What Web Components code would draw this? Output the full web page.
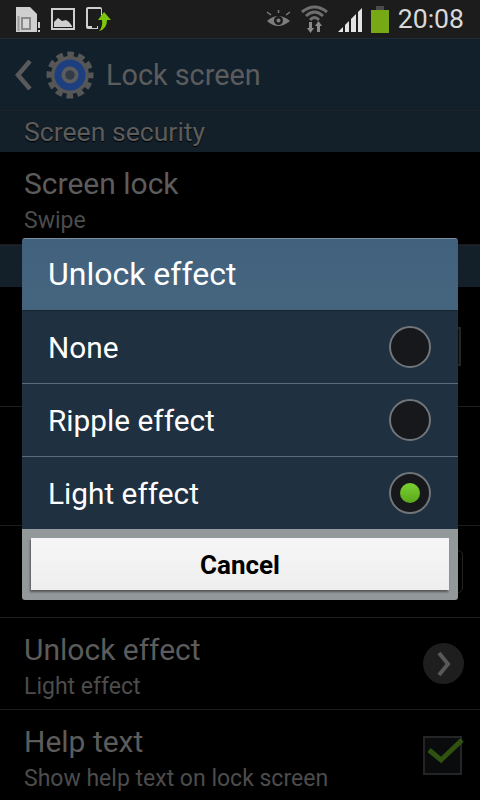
<!DOCTYPE html>
<html>
<head>
<meta charset="utf-8">
<title>Lock screen</title>
<style>
  html, body { margin: 0; background: #000; }
  body { font-family: Roboto, "Liberation Sans", sans-serif; }
</style>
</head>
<body>
<lock-screen></lock-screen>

<template id="status-bar-template">
  <style>
    :host { display: flex; align-items: center; height: 38px; background: #1c1c1c; color: #d9d9d9; }
    svg { display: block; flex: none; }
    .time { font-size: 26.600px; margin-left: 9px; margin-right: 16px; line-height: 38px; }
    .sd { margin-left: 16px; }
    .image { margin-left: 11px; }
    .upload { margin-left: 11px; }
    .eye { margin-left: auto; }
    .wifi { margin-left: 10px; }
    .signal { margin-left: 10px; }
    .battery { margin-left: 8px; }
  </style>
  <svg class="sd" width="24" height="26" viewBox="0 0 24 26">
    <path d="M0 1H14L21 8V26H0Z" fill="#cfcfcf"/>
    <path d="M5 11H15V24H5Z" fill="#8a8a8a"/>
    <path d="M7 13H13V22H7Z" fill="#d6d6d6"/>
    <rect x="1.500" y="10" width="2" height="15" fill="#9a9a9a"/>
    <rect x="22" y="16" width="2" height="6" fill="#cfcfcf"/>
    <rect x="22" y="24" width="2" height="2" fill="#cfcfcf"/>
  </svg>
  <svg class="image" width="24" height="22" viewBox="0 0 24 22">
    <rect x="1" y="1" width="22" height="20" fill="none" stroke="#cfcfcf" stroke-width="2"/>
    <path d="M3 19V14L7 10L11 13L15 12L18 14L21 18V19Z" fill="#cfcfcf"/>
  </svg>
  <svg class="upload" width="25" height="26" viewBox="0 0 25 26">
    <path d="M2 1H14Q16 1 16 3V9L12 14V23H2Q0 23 0 21V3Q0 1 2 1Z" fill="#cfcfcf"/>
    <rect x="2" y="3" width="13" height="17" fill="#1c1c1c"/>
    <rect x="6" y="20" width="5" height="2" fill="#1c1c1c"/>
    <path d="M18 6L25 14H21Q21 23 13 25Q17 21 16 14H12Z" fill="#7cc70e"/>
  </svg>
  <svg class="eye" width="25" height="19" viewBox="0 0 25 19">
    <path d="M1 11Q12 1 24 11Q12 21 1 11Z" fill="#7d7d7d"/>
    <circle cx="12.500" cy="10.500" r="4.500" fill="#1c1c1c"/>
    <circle cx="12.500" cy="10.500" r="2" fill="#7d7d7d"/>
    <path d="M1 2L5 5M12.500 0V3M24 2L20 5" stroke="#7d7d7d" stroke-width="1.500" fill="none"/>
  </svg>
  <svg class="wifi" width="27" height="28" viewBox="0 0 27 28">
    <path d="M1 7Q13.500 -3 26 7" fill="none" stroke="#6e6e6e" stroke-width="3"/>
    <path d="M5 11Q13.500 3 22 11" fill="none" stroke="#6e6e6e" stroke-width="3"/>
    <path d="M9 15Q13.500 10 18 15" fill="none" stroke="#6e6e6e" stroke-width="3"/>
    <path d="M8 17H11V23H13L9.500 28L6 23H8Z" fill="#8a8a8a"/>
    <path d="M16 27H19V21H21L17.500 16L14 21H16Z" fill="#8a8a8a"/>
  </svg>
  <svg class="signal" width="25" height="25" viewBox="0 0 25 25">
    <path d="M0 25L5 20V25Z" fill="#e4e4e4"/>
    <path d="M7 25V18L11 14V25Z" fill="#e4e4e4"/>
    <path d="M13 25V12L18 7V25Z" fill="#e4e4e4"/>
    <path d="M20 25V5L24 1V25Z" fill="#e4e4e4"/>
  </svg>
  <svg class="battery" width="18" height="27" viewBox="0 0 18 27">
    <rect x="5" y="0" width="8" height="4" fill="#4a4a4a"/>
    <rect x="0" y="4" width="18" height="23" fill="#77a916"/>
  </svg>
  <span class="time"><slot></slot></span>
</template>

<template id="action-bar-template">
  <style>
    :host { display: flex; align-items: center; height: 71px; background: #12202c; border-top: 1px solid #1f2b35; color: #5c5c5c; font-size: 28.800px; }
    svg { display: block; flex: none; }
    .back { margin-left: 15px; }
    .gear { margin-left: 14px; }
    .title { margin-left: 12px; }
  </style>
  <svg class="back" width="17" height="30" viewBox="0 0 17 30">
    <path d="M15 1L3 15L15 29" fill="none" stroke="#5a5a5a" stroke-width="4.500"/>
  </svg>
  <svg class="gear" width="48" height="48" viewBox="0 0 48 48">
    <circle cx="24" cy="24" r="20.500" fill="none" stroke="#565656" stroke-width="6" stroke-dasharray="6.500 4.230" stroke-dashoffset="3.250"/>
    <circle cx="24" cy="24" r="19" fill="#565656"/>
    <circle cx="24" cy="24" r="15.500" fill="#1d3f80"/>
    <circle cx="24" cy="24" r="6.500" fill="none" stroke="#5c5c5c" stroke-width="4"/>
    <circle cx="24" cy="24" r="4.500" fill="#333b44"/>
  </svg>
  <span class="title"><slot></slot></span>
</template>

<template id="section-header-template">
  <style>
    :host { display: flex; align-items: center; box-sizing: border-box; padding-left: 24px; background: #13202a; color: #5c5c5c; font-size: 26.600px; border-top: 1px solid #1c2227; text-shadow: 0 1px 1px #000; }
  </style>
  <slot></slot>
</template>

<template id="setting-row-template">
  <style>
    :host { display: flex; align-items: center; box-sizing: border-box; padding: 0 16px 0 24px; background: #000; border-bottom: 1px solid #1c1c1c; color: #5c5c5c; }
    .text { flex: 1; padding-top: 6px; }
    .title { font-size: 30px; line-height: 36px; }
    .sub { font-size: 23px; line-height: 30px; margin-top: 4px; color: #4c4c4c; }
  </style>
  <div class="text">
    <div class="title"><slot name="title"></slot></div>
    <div class="sub"><slot name="sub"></slot></div>
  </div>
  <slot name="control"></slot>
</template>

<template id="radio-row-template">
  <style>
    :host { display: flex; align-items: center; height: 72px; padding: 0 27px 0 26px; color: #fff; font-size: 29.800px; border-top: 1px solid #5b6b78; }
    :host(:first-of-type) { border-top: 0; }
    .label { flex: 1; }
    .radio { box-sizing: border-box; width: 42px; height: 42px; border-radius: 50%; background: #17181b; border: 2px solid #70757a; display: flex; align-items: center; justify-content: center; }
    .dot { width: 20px; height: 20px; border-radius: 50%; background: linear-gradient(#7bd030, #5aa81c); display: none; }
    :host([checked]) .dot { display: block; }
  </style>
  <span class="label"><slot></slot></span>
  <span class="radio"><span class="dot"></span></span>
</template>

<template id="unlock-dialog-template">
  <style>
    :host { display: block; position: absolute; left: 22px; top: 200px; width: 436px; border-radius: 3px; overflow: hidden; }
    .title { box-sizing: border-box; height: 73px; display: flex; align-items: center; padding: 0 0 2px 26px; background: linear-gradient(#42617d, #45657f); border-top: 1px solid #7b8d9c; border-bottom: 1px solid #172531; color: #fff; font-size: 32px; }
    .list { background: #1f3040; }
    .footer { box-sizing: border-box; height: 71px; padding: 9px 9px 10px; background: #93989a; }
    button { display: block; width: 100%; height: 52px; border: 0; padding: 1px 0 0; background: linear-gradient(#f6f6f6, #eeeeee); box-shadow: -1px 2px 2px #555; color: #000; font: bold 26px Roboto, "Liberation Sans", sans-serif; }
  </style>
  <div class="title"><slot name="title"></slot></div>
  <div class="list"><slot></slot></div>
  <div class="footer"><button><slot name="action"></slot></button></div>
</template>

<template id="lock-screen-template">
  <style>
    :host { display: flex; flex-direction: column; width: 480px; height: 800px; overflow: hidden; background: #000; }
    main { position: relative; flex: 1; min-height: 0; }
    .h1 { height: 42px; }
    .h2 { height: 42px; }
    .check { box-sizing: border-box; width: 39px; height: 39px; margin-right: 2px; border: 2px solid #252525; background: #090b0c; position: relative; }
    .check svg { position: absolute; left: 2px; top: -2px; }
    .hidden-check { margin-right: 3px; }
    .hidden-box { box-sizing: border-box; width: 40px; height: 43px; margin-right: 1px; border: 1px solid #222; border-radius: 5px; }
    .arrow { width: 41px; height: 41px; border-radius: 50%; background: #1e1e1e; display: flex; align-items: center; justify-content: center; }
    .r1 { height: 93px; }
    .r2 { height: 120px; }
    .r3 { height: 119px; }
    .r4 { height: 92px; }
    .r5 { height: 92px; }
    .r6 { height: 91px; border-bottom: 0; }
  </style>
  <status-bar>20:08</status-bar>
  <main>
    <action-bar>Lock screen</action-bar>
    <section-header class="h1">Screen security</section-header>
    <setting-row class="r1"><span slot="title">Screen lock</span><span slot="sub">Swipe</span></setting-row>
    <section-header class="h2"></section-header>
    <setting-row class="r2"><span slot="control" class="check hidden-check"></span></setting-row>
    <setting-row class="r3"></setting-row>
    <setting-row class="r4"><span slot="control" class="hidden-box"></span></setting-row>
    <setting-row class="r5">
      <span slot="title">Unlock effect</span><span slot="sub">Light effect</span>
      <span slot="control" class="arrow"><svg width="14" height="24" viewBox="0 0 14 24"><path d="M2 1L11 12L2 23" fill="none" stroke="#585858" stroke-width="4"/></svg></span>
    </setting-row>
    <setting-row class="r6">
      <span slot="title">Help text</span><span slot="sub">Show help text on lock screen</span>
      <span slot="control" class="check"><svg width="40" height="32" viewBox="0 0 40 32"><path d="M2 14L14 24L35 4" fill="none" stroke="#2f5210" stroke-width="5"/></svg></span>
    </setting-row>
    <unlock-dialog>
      <span slot="title">Unlock effect</span>
      <radio-row>None</radio-row>
      <radio-row>Ripple effect</radio-row>
      <radio-row checked>Light effect</radio-row>
      <span slot="action">Cancel</span>
    </unlock-dialog>
  </main>
</template>

<script>
  /**
   * Defines a custom element whose shadow root is cloned from a template.
   *
   * @param {string} name The tag name, also the template id prefix.
   */
  function defineFromTemplate (name) {
    customElements.define(name, class extends HTMLElement {
      /**
       * Attaches the shadow DOM.
       */
      constructor () {
        super()
        this.attachShadow({ mode: 'open' })
        const template = document.getElementById(name + '-template')
        this.shadowRoot.appendChild(template.content.cloneNode(true))
      }
    })
  }

  ;['status-bar', 'action-bar', 'section-header', 'setting-row', 'radio-row', 'unlock-dialog', 'lock-screen'].forEach(defineFromTemplate)
</script>
</body>
</html>
